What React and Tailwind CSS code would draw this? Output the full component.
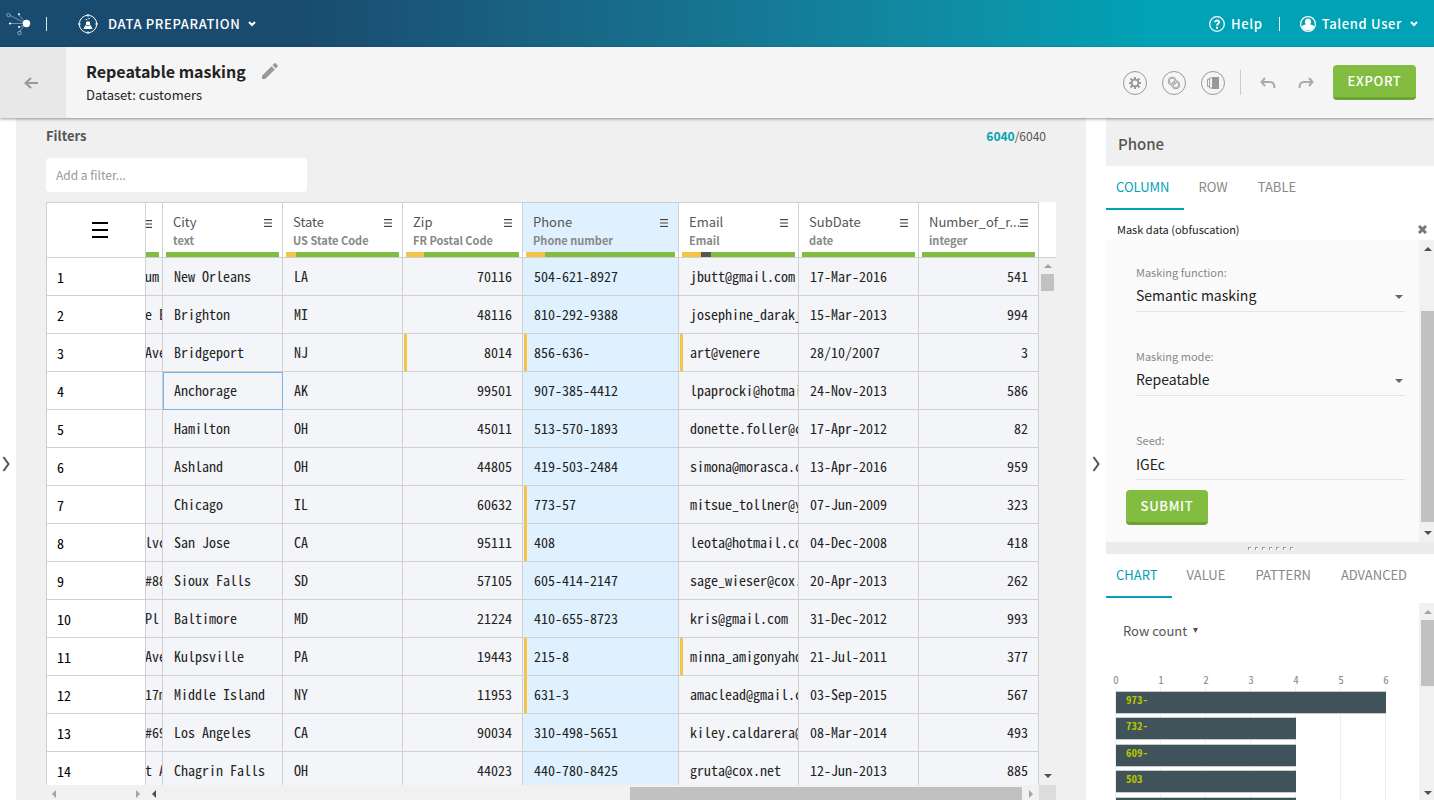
import React from "react";

const columns = [
  { name: "City", type: "text" },
  { name: "State", type: "US State Code", warn: 9 },
  { name: "Zip", type: "FR Postal Code", warn: 16 },
  { name: "Phone", type: "Phone number", warn: 13, selected: true },
  { name: "Email", type: "Email", warn: 17, empty: 9 },
  { name: "SubDate", type: "date" },
  { name: "Number_of_r...", type: "integer" },
];

const rows = [
  ["um", "New Orleans", "LA", "70116", "504-621-8927", "jbutt@gmail.com", "17-Mar-2016", "541"],
  ["e E", "Brighton", "MI", "48116", "810-292-9388", "josephine_darakj", "15-Mar-2013", "994"],
  ["Ave", "Bridgeport", "NJ", "8014", "856-636-", "art@venere", "28/10/2007", "3"],
  ["", "Anchorage", "AK", "99501", "907-385-4412", "lpaprocki@hotmai", "24-Nov-2013", "586"],
  ["", "Hamilton", "OH", "45011", "513-570-1893", "donette.foller@c", "17-Apr-2012", "82"],
  ["", "Ashland", "OH", "44805", "419-503-2484", "simona@morasca.c", "13-Apr-2016", "959"],
  ["", "Chicago", "IL", "60632", "773-57", "mitsue_tollner@y", "07-Jun-2009", "323"],
  ["lvc", "San Jose", "CA", "95111", "408", "leota@hotmail.co", "04-Dec-2008", "418"],
  ["#88", "Sioux Falls", "SD", "57105", "605-414-2147", "sage_wieser@cox.", "20-Apr-2013", "262"],
  ["Pl", "Baltimore", "MD", "21224", "410-655-8723", "kris@gmail.com", "31-Dec-2012", "993"],
  ["Ave", "Kulpsville", "PA", "19443", "215-8", "minna_amigonyaho", "21-Jul-2011", "377"],
  ["17m", "Middle Island", "NY", "11953", "631-3", "amaclead@gmail.c", "03-Sep-2015", "567"],
  ["#69", "Los Angeles", "CA", "90034", "310-498-5651", "kiley.caldarera@", "08-Mar-2014", "493"],
  ["t A", "Chagrin Falls", "OH", "44023", "440-780-8425", "gruta@cox.net", "12-Jun-2013", "885"],
];

const invalid = new Set(["2-3", "2-4", "2-5", "6-4", "7-4", "10-4", "10-5", "11-4"]);

const bars = [
  { label: "973-", value: 6, y: 17 },
  { label: "732-", value: 4, y: 43 },
  { label: "609-", value: 4, y: 70 },
  { label: "503", value: 4, y: 96 },
  { label: "", value: 4, y: 123 },
];

function Triangle({ dir, className = "" }) {
  const d = { up: "M0 5 4 1l4 4z", down: "M0 1l4 4 4-4z", left: "M6 0 2 4l4 4z", right: "M2 0l4 4-4 4z" }[dir];
  return (
    <svg className={"shrink-0 " + className} width="8" height={dir === "up" || dir === "down" ? 6 : 8} fill="currentColor" aria-hidden="true">
      <path d={d} />
    </svg>
  );
}

function Chevron() {
  return (
    <svg width="8" height="6" fill="none" stroke="currentColor" strokeWidth="2" aria-hidden="true">
      <path d="M1 1l3 3 3-3" />
    </svg>
  );
}

function MenuLines() {
  return (
    <svg width="8" height="9" aria-hidden="true">
      <path d="M0 0h8v1H0zM0 7h8v1H0z" fill="#444" />
      <path d="M0 3h8v2H0z" fill="#999" />
      <path d="M0 1h8v1H0zM0 6h8v1H0z" fill="#ddd" />
    </svg>
  );
}

function TopBar() {
  return (
    <header className="flex h-[47px] shrink-0 items-center justify-between bg-linear-to-r from-[#194a6f] from-20% to-[#00a2b5] to-80% text-white">
      <div className="flex items-center">
        <a href="#home" aria-label="Talend home" className="ml-1.5">
          <svg width="26" height="26" viewBox="0 0 26 26" fill="none" stroke="#fff">
            <path d="M4 4.500l16 8M13 4l7 8M5 12.500h15M20 12.500l-7 4M20 12.500l-7 9" strokeOpacity=".5" strokeWidth=".8" />
            <circle cx="2.500" cy="4" r="1.700" strokeOpacity=".5" strokeWidth=".9" />
            <circle cx="13.500" cy="22" r="1.800" strokeOpacity=".5" strokeWidth=".9" />
            <circle cx="20.500" cy="12.500" r="3.700" fill="#fff" stroke="none" />
            <circle cx="13" cy="3.300" r="1" fill="#fff" stroke="none" />
            <circle cx="4" cy="12.500" r="1.100" fill="#fff" stroke="none" />
            <circle cx="13" cy="16" r="1" fill="#fff" stroke="none" />
          </svg>
        </a>
        <span className="ml-3.5 h-3.5 w-px bg-[#cfe9f2]" />
        <button type="button" className="ml-[31px] flex items-center text-[13px] leading-5 font-medium tracking-wider">
          <svg width="20" height="20" viewBox="0 0 20 20" fill="none" stroke="#fff" aria-hidden="true">
            <circle cx="10" cy="10" r="8.700" strokeWidth="1" strokeDasharray="11.670 2" strokeDashoffset="-1" />
            <path d="M10 0v2.500M10 17.500V20M0 10h2.500M17.500 10H20" strokeWidth="1.500" />
            <path d="M8.500 8v2.500L6 14.500h8l-2.500-4V8z" fill="#fff" />
            <circle cx="8.500" cy="5.500" r=".8" fill="#fff" stroke="none" />
            <circle cx="11" cy="4.500" r=".7" fill="#fff" stroke="none" />
            <path d="M8.300 11.500h3" stroke="#194a6f" strokeWidth=".8" />
          </svg>
          <span className="mr-2 ml-2.5">DATA PREPARATION</span>
          <Chevron />
        </button>
      </div>
      <div className="flex items-center text-[13px] leading-5 font-medium tracking-wider">
        <button type="button" className="flex items-center gap-1.5">
          <svg width="16" height="16" viewBox="0 0 16 16" fill="none" stroke="#fff" aria-hidden="true">
            <circle cx="8" cy="8" r="7.300" strokeWidth="1.300" />
            <path d="M6 6.300C6 3.900 10.100 4 10.100 6.300 10.100 7.700 8 7.700 8 9.500" strokeWidth="1.900" />
            <path d="M7 10.700h2v2H7z" fill="#fff" stroke="none" />
          </svg>
          <span>Help</span>
        </button>
        <span className="mx-4 h-3.5 w-px bg-white" />
        <button type="button" className="mr-4 ml-1 flex items-center">
          <svg width="16" height="16" viewBox="0 0 16 16" aria-hidden="true">
            <circle cx="8" cy="8" r="7.400" fill="none" stroke="#fff" strokeWidth="1.200" />
            <path d="M8 2.500a3.200 3.200 0 0 1 2 5.700c2 .5 3.500 1.200 4.500 2.300A7.400 7.400 0 0 1 1.500 10.500C2.500 9.400 4 8.700 6 8.200a3.200 3.200 0 0 1 2-5.700z" fill="#fff" />
          </svg>
          <span className="mr-2 ml-1.5">Talend User</span>
          <Chevron />
        </button>
      </div>
    </header>
  );
}

function RoundButton({ label, children }) {
  return (
    <button type="button" aria-label={label} className="flex size-6 items-center justify-center rounded-full border border-[#999] text-[#999]">
      {children}
    </button>
  );
}

function TitleBar() {
  return (
    <div className="relative z-10 flex h-[71px] shrink-0 items-stretch bg-[#f5f5f5] shadow-[0_1px_3px_rgba(0,0,0,0.4)]">
      <button type="button" aria-label="Back" className="flex w-[66px] items-center justify-center bg-[#e8e8e8] pr-1 text-[#999]">
        <svg width="14" height="12" fill="none" stroke="currentColor" strokeWidth="2" aria-hidden="true">
          <path d="M14 6H2M7 1L1.500 6 7 11" />
        </svg>
      </button>
      <div className="flex flex-1 flex-col pt-3 pl-5">
        <div className="flex items-center gap-4">
          <h1 className="text-[16px] leading-6 font-bold text-[#222]">Repeatable masking</h1>
          <button type="button" aria-label="Rename" className="text-[#999]">
            <svg width="16" height="16" viewBox="0 0 16 16" fill="currentColor" aria-hidden="true">
              <path d="M0 12.700V16h3.300L12.800 6.500 9.500 3.200zM15.700 3.600a1 1 0 0 0 0-1.200L13.600.3a1 1 0 0 0-1.200 0l-1.900 1.900 3.300 3.300z" />
            </svg>
          </button>
        </div>
        <p className="text-[13px] leading-6 text-[#222]">Dataset: customers</p>
      </div>
      <div className="flex items-center pr-[18px]">
        <div className="flex gap-[15px]">
          <RoundButton label="Settings">
            <svg width="12" height="12" viewBox="0 0 12 12" aria-hidden="true">
              <circle cx="6" cy="6" r="3.400" fill="none" stroke="currentColor" strokeWidth="1.900" />
              <path d="M6 0v2.500M6 9.500V12M0 6h2.500M9.500 6H12M1.500 1.500l2 2M8.500 8.500l2 2M1.500 10.500l2-2M8.500 3.500l2-2" stroke="currentColor" strokeWidth="2" />
            </svg>
          </RoundButton>
          <RoundButton label="Lookup">
            <svg width="14" height="14" viewBox="0 0 14 14" fill="none" stroke="currentColor" aria-hidden="true">
              <circle cx="5.200" cy="5.200" r="3.400" strokeWidth="2" />
              <circle cx="8.800" cy="8.800" r="3.400" strokeWidth="2" />
              <circle cx="5.200" cy="5.200" r="3.400" stroke="#f5f5f5" strokeWidth=".5" />
              <circle cx="8.800" cy="8.800" r="3.400" stroke="#f5f5f5" strokeWidth=".5" />
            </svg>
          </RoundButton>
          <RoundButton label="Versions">
            <svg width="14" height="12" viewBox="0 0 14 12" fill="none" stroke="currentColor" aria-hidden="true">
              <path d="M6 0h7v12H6z" fill="currentColor" stroke="none" />
              <path d="M6 1H3.500v10H6M3.500 2.500H1.500v7h2" strokeWidth=".9" />
            </svg>
          </RoundButton>
        </div>
        <span className="mx-[15px] h-[25px] w-px bg-[#ccc]" />
        <button type="button" aria-label="Undo" className="ml-1 text-[#aaa]">
          <svg width="16" height="12" fill="none" stroke="currentColor" strokeWidth="2" aria-hidden="true">
            <path d="M5 1L1.500 5 5 9M1.500 5H10c3 0 4.500 1.500 4.500 6" />
          </svg>
        </button>
        <button type="button" aria-label="Redo" className="ml-[22px] text-[#aaa]">
          <svg width="16" height="12" fill="none" stroke="currentColor" strokeWidth="2" aria-hidden="true">
            <path d="M11 1l3.500 4L11 9M14.500 5H6C3 5 1.500 6.500 1.500 11" />
          </svg>
        </button>
        <button type="button" className="ml-[19px] h-[35px] w-[83px] rounded border-b-3 border-[#6da333] bg-[#82bd41] text-[13px] leading-5 font-medium tracking-wider text-white">
          EXPORT
        </button>
      </div>
    </div>
  );
}

function QualityBar({ warn = 0, empty = 0 }) {
  return (
    <div className="flex h-[5px] bg-white px-[3px]">
      <span className="bg-[#f4c446]" style={{ width: warn + "%" }} />
      <span className="bg-[#555]" style={{ width: empty + "%" }} />
      <span className="flex-1 bg-[#82bd41]" />
    </div>
  );
}

function Grid() {
  return (
    <div className="mt-2.5 flex min-h-0 flex-1 flex-col">
      <div className="flex min-h-0 flex-1 overflow-hidden">
        <table className="w-full min-w-0 flex-1 table-fixed border-separate border-spacing-0 self-start border-t border-l border-[#d0d0d0]">
          <colgroup>
            <col className="w-[99px]" />
            <col className="w-[17px]" />
            <col className="w-[120px]" />
            <col className="w-[120px]" />
            <col className="w-[120px]" />
            <col className="w-[156px]" />
            <col className="w-[120px]" />
            <col className="w-[120px]" />
            <col className="w-[120px]" />
          </colgroup>
          <thead>
            <tr className="h-[55px] bg-white">
              <th className="border-r border-b border-[#d0d0d0] p-0 pl-2">
                <button type="button" aria-label="Table menu" className="block w-full">
                  <svg className="mx-auto" width="16" height="16" aria-hidden="true">
                    <path d="M0 0h16v2H0zM0 7h16v2H0zM0 14h16v2H0z" />
                  </svg>
                </button>
              </th>
              <th className="overflow-hidden border-r border-b border-[#d0d0d0] p-0 align-bottom">
                <div className="flex h-[49px] items-start pt-[17px]">
                  <button type="button" aria-label="Column menu" className="-ml-0.5">
                    <MenuLines />
                  </button>
                </div>
                <div className="mr-[3px] h-[5px] bg-[#82bd41]" />
              </th>
              {columns.map((c) => (
                <th key={c.name} scope="col" className="border-r border-b border-[#d0d0d0] p-0 text-left align-bottom">
                  <div className={"flex h-[49px] flex-col px-2.5 pt-[9px] " + (c.selected ? "bg-[#dff1ff]" : "")}>
                    <div className="flex items-center justify-between">
                      <span className="min-w-0 text-[13px] leading-5 font-normal whitespace-nowrap text-[#555]">{c.name}</span>
                      <button type="button" aria-label={c.name + " menu"} className="shrink-0 pt-0.5">
                        <MenuLines />
                      </button>
                    </div>
                    <span className="text-[11px] leading-4 font-bold text-[#888]">{c.type}</span>
                  </div>
                  <QualityBar warn={c.warn} empty={c.empty} />
                </th>
              ))}
            </tr>
          </thead>
          <tbody className="font-['Noto_Sans_Mono_CJK_SC','Liberation_Mono',monospace] text-[14px] leading-5 whitespace-nowrap text-[#222]">
            {rows.map((row, r) => (
              <tr key={r} className="h-[38px] bg-[#f4f5f8]">
                <th scope="row" className="border-r border-b border-[#d0d0d0] bg-white p-0 pl-2.5 text-left font-normal text-black">
                  {r + 1}
                </th>
                {row.map((value, c) => (
                  <td
                    key={c}
                    className={
                      "relative overflow-hidden border-r border-b p-0 pb-0.5 " +
                      (r === 3 && c === 1 ? "border-[#74b4e8] shadow-[inset_1px_1px_#74b4e8] " : "border-[#d0d0d0] ") +
                      (c === 0 ? "-indent-px " : c === 3 || c === 7 ? "pr-2.5 text-right " : "pl-[11px] ") +
                      (c === 4 ? "bg-[#dff1ff]" : "")
                    }
                  >
                    {invalid.has(r + "-" + c) && <span className="absolute inset-y-0 left-px w-[3px] bg-[#f4c446]" />}
                    {value}
                  </td>
                ))}
              </tr>
            ))}
          </tbody>
        </table>
        <div className="flex w-[17px] shrink-0 flex-col items-center">
          <div className="h-14 w-full shrink-0 border-b border-[#d0d0d0] bg-white" />
          <Triangle dir="up" className="mt-[5px] text-[#a3a3a3]" />
          <div className="mt-[5px] h-[17px] w-[13px] bg-[#c1c1c1]" />
          <Triangle dir="down" className="mt-auto mb-1.5 text-[#505050]" />
        </div>
      </div>
      <div className="flex h-[15px] shrink-0 items-center bg-[#f1f1f1]">
        <div className="flex w-[100px] justify-between px-1 pt-0.5 text-[#a3a3a3]">
          <Triangle dir="left" />
          <Triangle dir="right" />
        </div>
        <Triangle dir="left" className="mt-0.5 ml-1 text-[#505050]" />
        <div className="mt-0.5 mr-[5px] ml-auto h-[13px] w-[44%] max-w-[392px] bg-[#c1c1c1]" />
        <Triangle dir="right" className="mt-0.5 mr-[4px] text-[#a3a3a3]" />
        <div className="h-full w-[17px] bg-[#dcdcdc]" />
      </div>
    </div>
  );
}

function Toggle({ label }) {
  return (
    <button type="button" aria-label={label} className="text-[#555]">
      <svg width="9" height="16" fill="none" stroke="currentColor" strokeWidth="2" aria-hidden="true">
        <path d="M1.500 1l5 7-5 7" />
      </svg>
    </button>
  );
}

function Tabs({ items }) {
  return (
    <div role="tablist" className="flex h-11 shrink-0 text-[13px] leading-5 text-[#888]">
      {items.map((t, i) => (
        <button
          key={t}
          type="button"
          role="tab"
          aria-selected={i === 0}
          className={i === 0 ? "border-b-2 border-[#00a2b5] pr-3.5 pl-2.5 text-[#00a2b5]" : "border-b-2 border-transparent px-[15px]"}
        >
          {t}
        </button>
      ))}
    </div>
  );
}

function Scrollbar({ children }) {
  return <div className="flex w-[15px] shrink-0 flex-col items-center bg-[#f1f1f1] pl-0.5">{children}</div>;
}

function SelectField({ id, label, value, options }) {
  return (
    <div>
      <label htmlFor={id} className="block text-[11px] leading-4 text-[#888]">{label}</label>
      <div className="relative border-b border-[#e4e4e4] pb-0.5 pt-0.5">
        <select id={id} defaultValue={value} className="block h-[27px] w-full appearance-none bg-transparent text-[14px] text-[#222]">
          {options.map((o) => <option key={o}>{o}</option>)}
        </select>
        <Triangle dir="down" className="pointer-events-none absolute top-3.5 right-0.5 text-[#666]" />
      </div>
    </div>
  );
}

function Chart() {
  return (
    <svg className="block" width="290" height="140" aria-label="Row count chart">
      {[0, 1, 2, 3, 4, 5, 6].map((n) => (
        <g key={n}>
          <rect x={9 + n * 45} y="12" width="1" height="128" fill="#eee" />
          <text x={10 + n * 45} y="9" textAnchor="middle" fontSize="11" fill="#888" className="font-['Noto_Sans_Mono_CJK_SC','Liberation_Mono',monospace]">{n}</text>
        </g>
      ))}
      {bars.map((b) => (
        <g key={b.y}>
          <rect x="10" y={b.y - 1} width={b.value * 45} height="23" fill="#c5cbce" />
          <rect x="10" y={b.y} width={b.value * 45} height="21" fill="#40525a" />
          <text x="20" y={b.y + 12} fontSize="11" fontWeight="700" fill="#b3c400" className="font-['Noto_Sans_Mono_CJK_SC','Liberation_Mono',monospace]">{b.label}</text>
        </g>
      ))}
    </svg>
  );
}

function SidePanel() {
  return (
    <aside className="flex w-[328px] shrink-0 flex-col">
      <h2 className="h-12 shrink-0 bg-[#f0f0f0] pt-4 pl-3 text-[15px] leading-5 font-medium text-[#555]">Phone</h2>
      <Tabs items={["COLUMN", "ROW", "TABLE"]} />
      <div className="flex h-[30px] shrink-0 items-center justify-between pt-2 pr-[7px] pl-[11px] text-[11px] leading-4 text-[#222]">
        <span>Mask data (obfuscation)</span>
        <button type="button" aria-label="Close" className="text-[#777]">
          <svg width="9" height="9" fill="none" stroke="currentColor" strokeWidth="3" aria-hidden="true">
            <path d="M1 1l7 7M8 1L1 8" />
          </svg>
        </button>
      </div>
      <div className="flex h-[302px] shrink-0">
        <form className="flex-1 bg-[#fafafa] pt-6 pr-3.5 pl-[30px]" onSubmit={(e) => e.preventDefault()}>
          <div className="flex flex-col gap-9">
            <SelectField id="masking-function" label="Masking function:" value="Semantic masking" options={["Semantic masking"]} />
            <SelectField id="masking-mode" label="Masking mode:" value="Repeatable" options={["Repeatable"]} />
            <div>
              <label htmlFor="seed" className="block text-[11px] leading-4 text-[#888]">Seed:</label>
              <div className="border-b border-[#e4e4e4] pb-0.5 pt-0.5">
                <input id="seed" type="text" defaultValue="IGEc" className="block h-[27px] w-full bg-transparent text-[14px] text-[#222] outline-none" />
              </div>
            </div>
          </div>
          <button type="submit" className="mt-2.5 -ml-2.5 h-[35px] w-[82px] rounded border-b-3 border-[#6da333] bg-[#82bd41] text-[13px] leading-5 font-medium tracking-wider text-white">
            SUBMIT
          </button>
        </form>
        <Scrollbar>
          <Triangle dir="up" className="mt-1.5 text-[#505050]" />
          <div className="mt-[59px] h-[211px] w-full bg-[#c1c1c1]" />
          <Triangle dir="down" className="mt-auto mb-1.5 text-[#505050]" />
        </Scrollbar>
      </div>
      <div className="flex h-3 shrink-0 items-center justify-center gap-1 bg-[#ececec]">
        {[0, 1, 2, 3, 4, 5, 6].map((n) => (
          <span key={n} className="size-[3px] border-t border-l border-[#999] bg-white" />
        ))}
      </div>
      <Tabs items={["CHART", "VALUE", "PATTERN", "ADVANCED"]} />
      <div className="flex min-h-0 flex-1 overflow-hidden pt-[5px]">
        <div className="flex-1">
          <button type="button" className="mt-[18px] ml-[17px] flex items-center gap-1.5 text-[13px] leading-5 text-[#555]">
            Row count
            <svg width="5" height="6" fill="currentColor" aria-hidden="true">
              <path d="M0 0h5L2.500 5z" />
            </svg>
          </button>
          <div className="mt-[34px]">
            <Chart />
          </div>
        </div>
        <Scrollbar>
          <Triangle dir="up" className="mt-1.5 text-[#a3a3a3]" />
          <div className="mt-[5px] h-[66px] w-full bg-[#c1c1c1]" />
          <Triangle dir="down" className="mt-auto mb-1 text-[#505050]" />
        </Scrollbar>
      </div>
    </aside>
  );
}

export default function App() {
  return (
    <div className="flex h-screen flex-col overflow-hidden bg-white font-['Noto_Sans_CJK_SC','Noto_Sans',sans-serif]">
      <TopBar />
      <TitleBar />
      <div className="flex min-h-0 flex-1">
        <div className="flex w-4 shrink-0 items-center pt-2.5 pl-0.5">
          <Toggle label="Show recipe" />
        </div>
        <main className="flex min-w-0 flex-1 flex-col bg-[#f0f0f0] px-[30px]">
          <div className="flex items-center justify-between pt-2 pr-2.5 text-[#555]">
            <h2 className="text-[13px] leading-5 font-bold">Filters</h2>
            <p className="text-[12px] leading-5">
              <b className="text-[#00a2b5]">6040</b>/6040
            </p>
          </div>
          <input
            type="text"
            aria-label="Add a filter"
            placeholder="Add a filter..."
            className="mt-3 h-[34px] w-[261px] rounded bg-white px-2.5 pb-0.5 text-[12px] leading-5 placeholder:text-[#999]"
          />
          <Grid />
        </main>
        <div className="flex w-5 shrink-0 items-center pt-2.5 pl-1.5">
          <Toggle label="Hide panel" />
        </div>
        <SidePanel />
      </div>
    </div>
  );
}
